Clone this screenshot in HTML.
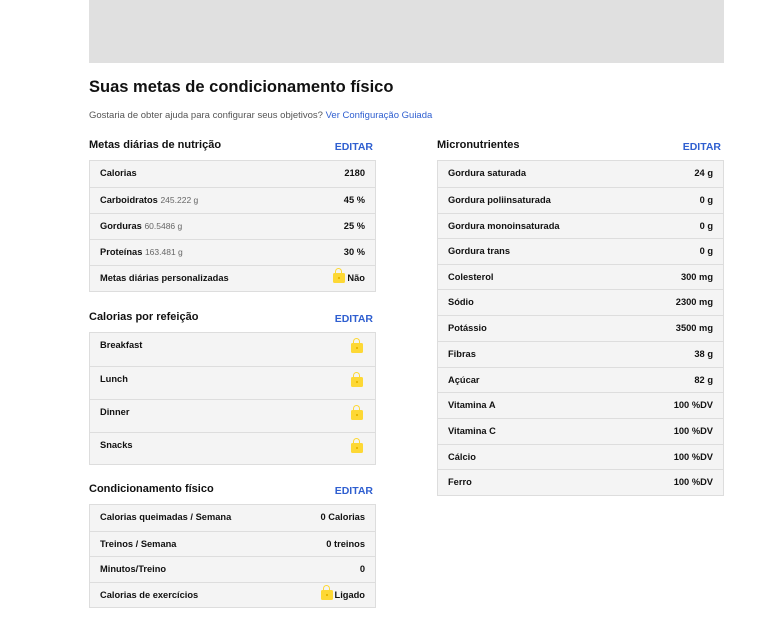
<!DOCTYPE html>
<html><head><meta charset="utf-8"><style>
body{margin:0;background:#fff;font-family:"Liberation Sans",sans-serif;color:#111;width:773px;height:619px;position:relative;overflow:hidden}
.top{position:absolute;left:89px;top:0;width:635px;height:63px;background:#e0e0e0}
h1{position:absolute;left:89px;top:78px;margin:0;font-size:16.5px;font-weight:bold}
.sub{position:absolute;left:89px;top:110px;font-size:9.5px;color:#555}
.sub a{color:#2f5fd0;text-decoration:none}
.hd{position:absolute;font-size:11px;font-weight:bold;width:287px}
.hd span{position:absolute;right:3px;top:2px;color:#2f5fd0;font-size:10.5px;font-weight:bold}
.tb{position:absolute;width:285px;border:1px solid #ddd;background:#f4f4f4}
.r{position:relative;border-top:1px solid #ddd;font-size:9.3px;font-weight:bold;box-sizing:border-box;padding:0 10px}
.r:first-child{border-top:none}
.r .v{position:absolute;right:10px}
.r small{font-weight:normal;color:#666;font-size:8.5px}
.lk{display:inline-block;width:12px;height:10px;background:#fdd835;border-radius:1.5px;position:relative;margin-right:2px;vertical-align:-2px}
.lk:before{content:"";position:absolute;left:2px;top:-5px;width:5px;height:5px;border:1.5px solid #fdd835;border-bottom:none;border-radius:4px 4px 0 0}
.lk:after{content:"";position:absolute;left:5px;top:4px;width:2px;height:2px;background:#e8b800}
</style></head><body>
<div class="top"></div>
<h1>Suas metas de condicionamento físico</h1>
<div class="sub">Gostaria de obter ajuda para configurar seus objetivos? <a>Ver Configuração Guiada</a></div>

<div class="hd" style="left:89px;top:139px">Metas diárias de nutrição<span>EDITAR</span></div>
<div class="tb" style="left:89px;top:160px">
<div class="r" style="height:26px;line-height:25px">Calorias<span class="v">2180</span></div>
<div class="r" style="height:26px;line-height:25px">Carboidratos <small>245.222 g</small><span class="v">45 %</span></div>
<div class="r" style="height:26px;line-height:25px">Gorduras <small>60.5486 g</small><span class="v">25 %</span></div>
<div class="r" style="height:26px;line-height:25px">Proteínas <small>163.481 g</small><span class="v">30 %</span></div>
<div class="r" style="height:26px;line-height:25px">Metas diárias personalizadas<span class="v"><i class="lk"></i>Não</span></div>
</div>

<div class="hd" style="left:89px;top:311px">Calorias por refeição<span>EDITAR</span></div>
<div class="tb" style="left:89px;top:332px">
<div class="r" style="height:33px;line-height:25px">Breakfast<span class="v" style="top:10px;line-height:10px"><i class="lk"></i></span></div>
<div class="r" style="height:33px;line-height:25px">Lunch<span class="v" style="top:10px;line-height:10px"><i class="lk"></i></span></div>
<div class="r" style="height:33px;line-height:25px">Dinner<span class="v" style="top:10px;line-height:10px"><i class="lk"></i></span></div>
<div class="r" style="height:32px;line-height:25px">Snacks<span class="v" style="top:10px;line-height:10px"><i class="lk"></i></span></div>
</div>

<div class="hd" style="left:89px;top:483px">Condicionamento físico<span>EDITAR</span></div>
<div class="tb" style="left:89px;top:504px">
<div class="r" style="height:26px;line-height:25px">Calorias queimadas / Semana<span class="v">0 Calorias</span></div>
<div class="r" style="height:25px;line-height:24px">Treinos / Semana<span class="v">0 treinos</span></div>
<div class="r" style="height:26px;line-height:25px">Minutos/Treino<span class="v">0</span></div>
<div class="r" style="height:25px;line-height:24px">Calorias de exercícios<span class="v"><i class="lk"></i>Ligado</span></div>
</div>

<div class="hd" style="left:437px;top:139px">Micronutrientes<span>EDITAR</span></div>
<div class="tb" style="left:437px;top:160px">
<div class="r" style="height:26px;line-height:25px">Gordura saturada<span class="v">24 g</span></div>
<div class="r" style="height:26px;line-height:25px">Gordura poliinsaturada<span class="v">0 g</span></div>
<div class="r" style="height:25px;line-height:24px">Gordura monoinsaturada<span class="v">0 g</span></div>
<div class="r" style="height:26px;line-height:25px">Gordura trans<span class="v">0 g</span></div>
<div class="r" style="height:25px;line-height:24px">Colesterol<span class="v">300 mg</span></div>
<div class="r" style="height:26px;line-height:25px">Sódio<span class="v">2300 mg</span></div>
<div class="r" style="height:26px;line-height:25px">Potássio<span class="v">3500 mg</span></div>
<div class="r" style="height:26px;line-height:25px">Fibras<span class="v">38 g</span></div>
<div class="r" style="height:25px;line-height:24px">Açúcar<span class="v">82 g</span></div>
<div class="r" style="height:26px;line-height:25px">Vitamina A<span class="v">100 %DV</span></div>
<div class="r" style="height:26px;line-height:25px">Vitamina C<span class="v">100 %DV</span></div>
<div class="r" style="height:25px;line-height:24px">Cálcio<span class="v">100 %DV</span></div>
<div class="r" style="height:26px;line-height:25px">Ferro<span class="v">100 %DV</span></div>
</div>
</body></html>
